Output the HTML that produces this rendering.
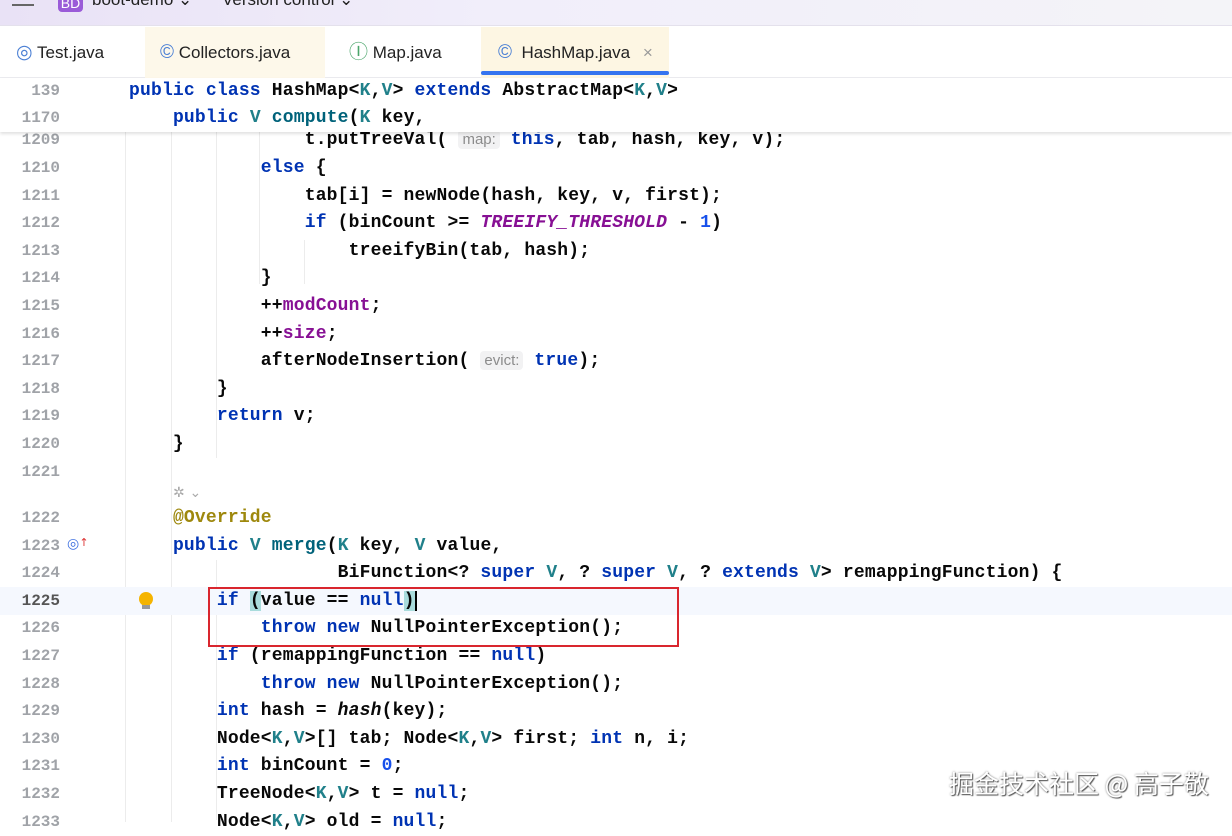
<!DOCTYPE html>
<html><head><meta charset="utf-8"><style>
*{margin:0;padding:0;box-sizing:border-box}
body{width:1232px;height:819px;overflow:hidden;background:#fff;position:relative;font-family:"Liberation Sans",sans-serif}
.top{position:absolute;left:0;top:0;width:1232px;height:26px;background:linear-gradient(90deg,#e9e2f6,#f1eefa 40%,#f4f4f8);border-bottom:1px solid #e4e1ec}
.tabs{position:absolute;left:0;top:27px;width:1232px;height:51px;background:#fff;border-bottom:1px solid #ebecf0}
.tab{position:absolute;top:0;height:51px;line-height:51px;font-size:17px;color:#222}
.tab span.ic{font-size:19px}
.code{font-family:"Liberation Mono",monospace;font-weight:bold;font-size:18px;color:#080808;letter-spacing:0.18px}
.ln{position:absolute;left:0;width:60px;text-align:right;font-family:"Liberation Mono",monospace;font-size:16px;color:#a0a3a8;font-weight:bold;height:28px;line-height:28px;letter-spacing:0}
.l{position:absolute;left:129px;height:28px;line-height:28px;white-space:pre}
.k{color:#0033b3}.t{color:#20808a}.m{color:#00627a}.f{color:#871094}.n{color:#1750eb}.a{color:#9e880d}
.i{font-style:italic}
.h{font-family:"Liberation Sans",sans-serif;font-weight:normal;font-size:15px;color:#8c8c8c;background:#f2f2f3;border-radius:4px;padding:1px 4px;letter-spacing:0}
.g{position:absolute;top:132px;width:1px;height:690px;background:#ececec}
</style></head><body>
<div class="top">
<div style="position:absolute;left:12px;top:4px;width:22px;height:2px;background:#666;box-shadow:0 -6px 0 #666"></div>
<div style="position:absolute;left:58px;top:-6px;width:25px;height:18px;background:#9a5bd8;border-radius:4px;color:#fff;font-size:14px;text-align:center;line-height:18px">BD</div>
<div style="position:absolute;left:92px;top:-10px;font-size:17px;color:#222">boot-demo ⌄</div>
<div style="position:absolute;left:222px;top:-10px;font-size:17px;color:#222">Version control ⌄</div>
</div>
<div class="tabs">
<div style="position:absolute;left:145px;top:0;width:180px;height:51px;background:#fdf8ea"></div>
<div style="position:absolute;left:481px;top:0;width:188px;height:51px;background:#fdf6e3"></div>
<div style="position:absolute;left:481px;top:44px;width:188px;height:4px;background:#3574f0;border-radius:2px"></div>
<div class="tab" style="left:16px"><span class="ic" style="color:#4a7fd4">◎</span> Test.java</div>
<div class="tab" style="left:160px"><span class="ic" style="color:#4a7fd4">©</span> Collectors.java</div>
<div class="tab" style="left:349px"><span class="ic" style="color:#4aa56a">Ⓘ</span> Map.java</div>
<div class="tab" style="left:498px"><span class="ic" style="color:#4a7fd4">©</span>&nbsp; HashMap.java <span style="color:#999;margin-left:8px">×</span></div>
</div>
<div class="g" style="left:125px"></div><div class="g" style="left:171px"></div>
<div class="g" style="left:216px;top:132px;height:326px"></div><div class="g" style="left:259px;top:132px;height:152px"></div>
<div class="g" style="left:304px;top:240px;height:44px"></div>
<div class="g" style="left:216px;top:560px;height:260px"></div>
<div style="position:absolute;left:0;top:587px;width:1232px;height:28px;background:#f5f8fe"></div>
<div class="code">
<div class="ln" style="top:126px">1209</div><div class="l" style="top:126px">        <span>        t.putTreeVal( </span><span class="h">map:</span><span class="k"> this</span>, tab, hash, key, v);</div>
<div class="ln" style="top:154px">1210</div><div class="l" style="top:154px">            <span class="k">else</span> {</div>
<div class="ln" style="top:181.6px">1211</div><div class="l" style="top:181.6px">                tab[i] = newNode(hash, key, v, first);</div>
<div class="ln" style="top:209.2px">1212</div><div class="l" style="top:209.2px">                <span class="k">if</span> (binCount &gt;= <span class="f i">TREEIFY_THRESHOLD</span> - <span class="n">1</span>)</div>
<div class="ln" style="top:236.8px">1213</div><div class="l" style="top:236.8px">                    treeifyBin(tab, hash);</div>
<div class="ln" style="top:264.4px">1214</div><div class="l" style="top:264.4px">            }</div>
<div class="ln" style="top:292px">1215</div><div class="l" style="top:292px">            ++<span class="f">modCount</span>;</div>
<div class="ln" style="top:319.6px">1216</div><div class="l" style="top:319.6px">            ++<span class="f">size</span>;</div>
<div class="ln" style="top:347.2px">1217</div><div class="l" style="top:347.2px">            afterNodeInsertion( <span class="h">evict:</span> <span class="k">true</span>);</div>
<div class="ln" style="top:374.8px">1218</div><div class="l" style="top:374.8px">        }</div>
<div class="ln" style="top:402.4px">1219</div><div class="l" style="top:402.4px">        <span class="k">return</span> v;</div>
<div class="ln" style="top:430px">1220</div><div class="l" style="top:430px">    }</div>
<div class="ln" style="top:457.6px">1221</div>
<div style="position:absolute;left:173px;top:485px;font-family:'DejaVu Sans';font-size:14px;color:#aaa;font-weight:normal">✲ ⌄</div>
<div class="ln" style="top:504px">1222</div><div class="l" style="top:504px">    <span class="a">@Override</span></div>
<div class="ln" style="top:531.6px">1223</div><div class="l" style="top:531.6px">    <span class="k">public</span> <span class="t">V</span> <span class="m">merge</span>(<span class="t">K</span> key, <span class="t">V</span> value,</div>
<div style="position:absolute;left:67px;top:536px;color:#3d6fe0;font-family:'DejaVu Sans';font-size:14px;font-weight:normal">◎<span style="color:#d33;font-size:11px;vertical-align:top">↑</span></div>
<div class="ln" style="top:559.2px">1224</div><div class="l" style="top:559.2px">                   BiFunction&lt;? <span class="k">super</span> <span class="t">V</span>, ? <span class="k">super</span> <span class="t">V</span>, ? <span class="k">extends</span> <span class="t">V</span>&gt; remappingFunction) {</div>
<div class="ln" style="top:586.8px;color:#555">1225</div><div class="l" style="top:586.8px">        <span class="k">if</span> <span style="background:#a9dcdc">(</span>value == <span class="k">null</span><span style="background:#a9dcdc">)</span><span style="border-left:2px solid #000"></span></div>
<div style="position:absolute;left:139px;top:592px;width:14px;height:14px;border-radius:50%;background:#f5b400"></div>
<div style="position:absolute;left:142px;top:605px;width:8px;height:4px;background:#999"></div>
<div class="ln" style="top:614.4px">1226</div><div class="l" style="top:614.4px">            <span class="k">throw new</span> NullPointerException();</div>
<div class="ln" style="top:642px">1227</div><div class="l" style="top:642px">        <span class="k">if</span> (remappingFunction == <span class="k">null</span>)</div>
<div class="ln" style="top:669.6px">1228</div><div class="l" style="top:669.6px">            <span class="k">throw new</span> NullPointerException();</div>
<div class="ln" style="top:697.2px">1229</div><div class="l" style="top:697.2px">        <span class="k">int</span> hash = <span class="i">hash</span>(key);</div>
<div class="ln" style="top:724.8px">1230</div><div class="l" style="top:724.8px">        Node&lt;<span class="t">K</span>,<span class="t">V</span>&gt;[] tab; Node&lt;<span class="t">K</span>,<span class="t">V</span>&gt; first; <span class="k">int</span> n, i;</div>
<div class="ln" style="top:752.4px">1231</div><div class="l" style="top:752.4px">        <span class="k">int</span> binCount = <span class="n">0</span>;</div>
<div class="ln" style="top:780px">1232</div><div class="l" style="top:780px">        TreeNode&lt;<span class="t">K</span>,<span class="t">V</span>&gt; t = <span class="k">null</span>;</div>
<div class="ln" style="top:807.6px">1233</div><div class="l" style="top:807.6px">        Node&lt;<span class="t">K</span>,<span class="t">V</span>&gt; old = <span class="k">null</span>;</div>
<div style="position:absolute;left:0;top:78px;width:1232px;height:54px;background:#fff;box-shadow:0 2px 3px rgba(0,0,0,0.12)">
<div class="ln" style="top:-1px">139</div><div class="l" style="top:-1px"><span class="k">public class</span> HashMap&lt;<span class="t">K</span>,<span class="t">V</span>&gt; <span class="k">extends</span> AbstractMap&lt;<span class="t">K</span>,<span class="t">V</span>&gt;</div>
<div class="ln" style="top:26px">1170</div><div class="l" style="top:26px">    <span class="k">public</span> <span class="t">V</span> <span class="m">compute</span>(<span class="t">K</span> key,</div>
</div>
</div>
<div style="position:absolute;left:208px;top:587px;width:471px;height:60px;border:2px solid #d9262e"></div>
<div style="position:absolute;left:949px;top:765px;font-family:'Noto Sans CJK SC',sans-serif;font-size:25px;color:#fff;text-shadow:1px 1px 1px #555,0 0 2px #888;white-space:nowrap">掘金技术社区 @ 高子敬</div>
</body></html>
